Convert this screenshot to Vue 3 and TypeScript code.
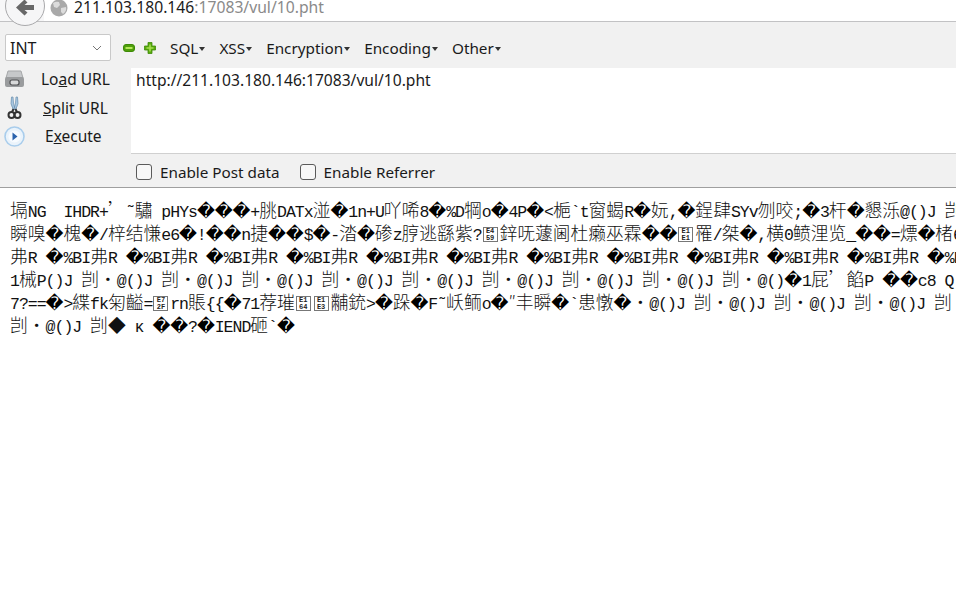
<script setup lang="ts">
type Seg = { t: string; k: 'lat' | 'cjk' | 'rep' | 'box'; a?: string; b?: string }

const rows: string[] = [
  "塥NG  IHDR+’˜驌 pHYs���+朓DATx湴�1n+U吖唏8�%D犅o�4P�<梔`t窗蝎R�妧,�鋥肆SYv刎咬;�3杆�懇泺@()J 剀",
  "瞬嗅�槐�/梓结慊e6�!��n捷��$�-涾�碜z脝逃繇紫?[E459]鋅呒蘧阃杜癞巫霖��[E1E1]罹/桀�,横0鲼浬览_��=熛�楮6N",
  "弗R �%BI".repeat(13),
  "1械P()J 剀・" + "@()J 剀・".repeat(8) + "@()�1屁’餡P ��c8 Q`",
  "7?==�>緤fk匊齸=[E72F]rn賬{{�71荐璀[E164][E1E3]黼銃>�跺�F˜岆鲕o�″丰瞬�`患憞�・" + "@()J 剀・".repeat(5),
  "剀・@()J 剀◆ ĸ ��?�IEND砸`�"
]

function parse(line: string): Seg[] {
  const out: Seg[] = []
  let i = 0
  while (i < line.length) {
    const c = line[i]
    if (c === '[' && line[i + 5] === ']') {
      out.push({ t: '', k: 'box', a: line.slice(i + 1, i + 3), b: line.slice(i + 3, i + 5) })
      i += 6
      continue
    }
    const code = c.charCodeAt(0)
    const k: Seg['k'] = c === '�' ? 'rep' : code < 0x2000 ? 'lat' : 'cjk'
    const last = out[out.length - 1]
    if (k !== 'rep' && last && last.k === k) last.t += c
    else out.push({ t: c, k })
    i++
  }
  return out
}

const lines = rows.map(parse)
const menus = ['SQL', 'XSS', 'Encryption', 'Encoding', 'Other']
</script>

<template>
  <div class="page">
    <header class="nav">
      <button class="back" aria-label="Back">
        <svg width="20" height="18" viewBox="0 0 20 18">
          <path d="M9.5 0.5 L1 8.5 L9.5 16.5 L12.5 13.5 L9.5 10.9 H19 V6.1 H9.5 L12.5 3.5 Z" fill="#686868" />
        </svg>
      </button>
      <div class="address">
        <svg class="globe" width="18" height="18" viewBox="0 0 18 18">
          <circle cx="9" cy="9" r="8.5" fill="#a9a9a9" />
          <path d="M3 4 Q6 2 9 3 L10 6 L7 9 L4 8 Z M11 9 L16 8 Q17 12 13 15 L11 13 Z" fill="#dcdcdc" />
        </svg>
        <span class="host">211.103.180.146</span><span class="rest">:17083/vul/10.pht</span>
      </div>
    </header>

    <section class="hackbar">
      <div class="tools">
        <div class="select">
          <span>INT</span>
          <svg width="10" height="6" viewBox="0 0 10 6"><path d="M1 1 L5 5 L9 1" fill="none" stroke="#777" stroke-width="1" /></svg>
        </div>
        <svg class="minus" width="12" height="8" viewBox="0 0 12 8">
          <rect x="0.5" y="0.5" width="11" height="7" rx="2.5" fill="#4f9f0b" stroke="#3d8a06" />
          <rect x="2.5" y="3" width="7" height="2" fill="#b5e85a" />
        </svg>
        <svg class="plus" width="12" height="12" viewBox="0 0 12 12">
          <path d="M4 0.5 H8 V4 H11.5 V8 H8 V11.5 H4 V8 H0.5 V4 H4 Z" fill="#58a90e" stroke="#3f8c07" stroke-width="0.8" stroke-linejoin="round" />
          <path d="M5.2 2.5 H6.8 V5.2 H9.5 V6.8 H6.8 V9.5 H5.2 V6.8 H2.5 V5.2 H5.2 Z" fill="#a5de4f" />
        </svg>
        <nav class="menus">
          <span v-for="m in menus" :key="m" class="menu">{{ m }}<i class="caret"></i></span>
        </nav>
      </div>

      <div class="work">
        <div class="actions">
          <div class="action">
            <svg width="21" height="18" viewBox="0 0 21 18">
              <path d="M4 1 H17 L19 8 H2 Z" fill="#c6c8ca" stroke="#a5a7a9" />
              <rect x="1" y="7" width="19" height="10" rx="2" fill="#9a9c9e" />
              <rect x="6" y="10" width="9" height="5" rx="2" fill="#d8d9da" stroke="#4f5052" stroke-width="1.2" />
            </svg>
            <span class="lbl load">Lo<u>a</u>d URL</span>
          </div>
          <div class="action">
            <svg width="21" height="24" viewBox="0 0 21 24">
              <path d="M7.5 1 Q5.5 8 9.5 14 L11 13 Q9 7 9 1 Z M13.5 1 Q15.5 8 11.5 14 L10 13 Q12 7 12 1 Z" fill="#a9c8e2" stroke="#6b8fae" stroke-width="0.7" />
              <circle cx="7.5" cy="19" r="3" fill="none" stroke="#333" stroke-width="2" />
              <circle cx="13.5" cy="19" r="3" fill="none" stroke="#333" stroke-width="2" />
              <path d="M9.5 13 L8 16 M11.5 13 L13 16" stroke="#333" stroke-width="2" />
            </svg>
            <span class="lbl split"><u>S</u>plit URL</span>
          </div>
          <div class="action">
            <svg width="21" height="21" viewBox="0 0 21 21">
              <circle cx="10.5" cy="10.5" r="9.5" fill="#eaf3fb" stroke="#a9cdec" stroke-width="1.6" />
              <circle cx="10.5" cy="10.5" r="6" fill="#f7fbff" />
              <path d="M8.5 6.5 L13.5 10.5 L8.5 14.5 Z" fill="#2a63ad" />
            </svg>
            <span class="lbl exec">E<u>x</u>ecute</span>
          </div>
        </div>
        <div class="field">http://211.103.180.146:17083/vul/10.pht</div>
      </div>

      <div class="checks">
        <label class="check"><span class="box"></span>Enable Post data</label>
        <label class="check"><span class="box"></span>Enable Referrer</label>
      </div>
    </section>

    <main class="body">
      <div v-for="(line, i) in lines" :key="i" class="line">
        <template v-for="(s, j) in line" :key="j">
          <span v-if="s.k === 'box'" class="cell"><span class="tofu"><span>{{ s.a }}</span><span>{{ s.b }}</span></span></span>
          <span v-else :class="s.k">{{ s.t }}</span>
        </template>
      </div>
    </main>
  </div>
</template>

<style>
html, body { margin: 0; background: #fff; overflow: hidden; }
</style>

<style scoped>
.page {
  width: 956px;
  height: 611px;
  overflow: hidden;
  background: #fff;
  font-family: "Noto Sans", "Open Sans", sans-serif;
  color: #1a1a1a;
}
.nav {
  display: flex;
  height: 21px;
  background: #f7f7f8;
  border-bottom: 1px solid #c2c2c4;
  position: relative;
  z-index: 1;
}
.back {
  position: relative;
  z-index: 2;
  flex: none;
  width: 40px;
  height: 40px;
  margin: -14px 0 0 5px;
  padding: 3px 0 0;
  border: 1px solid #a9a9ab;
  border-radius: 50%;
  background: #f6f6f7;
  box-sizing: border-box;
  display: flex;
  align-items: center;
  justify-content: center;
}
.address {
  flex: 1;
  display: flex;
  align-items: center;
  height: 21px;
  background: #fff;
  margin-left: -1px;
  padding-left: 6px;
  font-size: 15.7px;
  line-height: 15px;
  white-space: nowrap;
}
.globe { flex: none; margin: -5px 6px 0 0; }
.host { color: #1c1c1c; margin-top: -6px; }
.rest { color: #8a8a8a; margin-top: -6px; }

.hackbar {
  background: #f1f1f1;
  border-bottom: 1px solid #9f9f9f;
  height: 166px;
  box-sizing: border-box;
  padding-top: 12px;
}
.tools {
  display: flex;
  align-items: center;
  height: 27px;
  padding-left: 5px;
}
.select {
  width: 106px;
  height: 27px;
  box-sizing: border-box;
  background: #fff;
  border: 1px solid #c9c9c9;
  border-radius: 2px;
  padding: 0 8px 0 4px;
  display: flex;
  align-items: center;
  justify-content: space-between;
  font-size: 16px;
}
.minus { margin-left: 12px; }
.plus { margin-left: 9px; }
.menus { display: flex; margin-left: 14px; font-size: 15.3px; }
.menu { display: flex; align-items: center; margin-right: 14px; }
.caret {
  width: 0;
  height: 0;
  margin: 2px 0 0 1px;
  border: 3px solid transparent;
  border-top: 4px solid #333;
  border-bottom: 0;
}
.work {
  display: grid;
  grid-template-columns: 131px 1fr;
  height: 86px;
  margin-top: 7px;
}
.actions { display: flex; flex-direction: column; margin-top: -3px; }
.action {
  height: 28.5px;
  flex: none;
  display: flex;
  align-items: center;
  padding-left: 4px;
  font-size: 15.5px;
}
.action svg { flex: none; }
.lbl { margin-left: 16px; white-space: nowrap; }
.split { margin-left: 18px; }
.exec { margin-left: 20px; }
.field {
  background: #fff;
  border-bottom: 1px solid #d0d0d0;
  padding: 2px 5px;
  font-size: 15.6px;
  line-height: 20px;
  white-space: nowrap;
}
.checks {
  display: flex;
  align-items: center;
  height: 36px;
  padding-left: 136px;
  gap: 20px;
  font-size: 15.25px;
}
.check { display: flex; align-items: center; gap: 8px; }
.box {
  width: 16px;
  height: 16px;
  box-sizing: border-box;
  border: 1px solid #5a5a5a;
  border-radius: 3px;
  background: #f7f7f7;
}

.body { padding: 10px 0 0 10px; color: #111; }
.line {
  height: 23px;
  line-height: 23px;
  white-space: pre;
  overflow: hidden;
  font-size: 17.8px;
}
.lat {
  font-family: "Liberation Mono", monospace;
  font-size: 16.5px;
  letter-spacing: -1px;
}
.cjk { font-family: "Noto Sans CJK SC", sans-serif; font-size: 17.8px; font-weight: 300; }
.rep {
  display: inline-block;
  width: 17.8px;
  text-align: center;
  font-family: "DejaVu Sans", sans-serif;
  font-size: 17.5px;
  color: #000;
}
.cell {
  display: inline-block;
  width: 17.8px;
  height: 16px;
  overflow: hidden;
  vertical-align: -3px;
}
.tofu {
  display: flex;
  flex-direction: column;
  width: 15px;
  height: 15px;
  margin-left: 1px;
  box-sizing: border-box;
  border: 1px solid #777;
  font-family: "Liberation Mono", monospace;
  font-size: 7px;
  line-height: 6.5px;
  font-weight: 700;
  text-align: center;
  color: #222;
}
</style>
